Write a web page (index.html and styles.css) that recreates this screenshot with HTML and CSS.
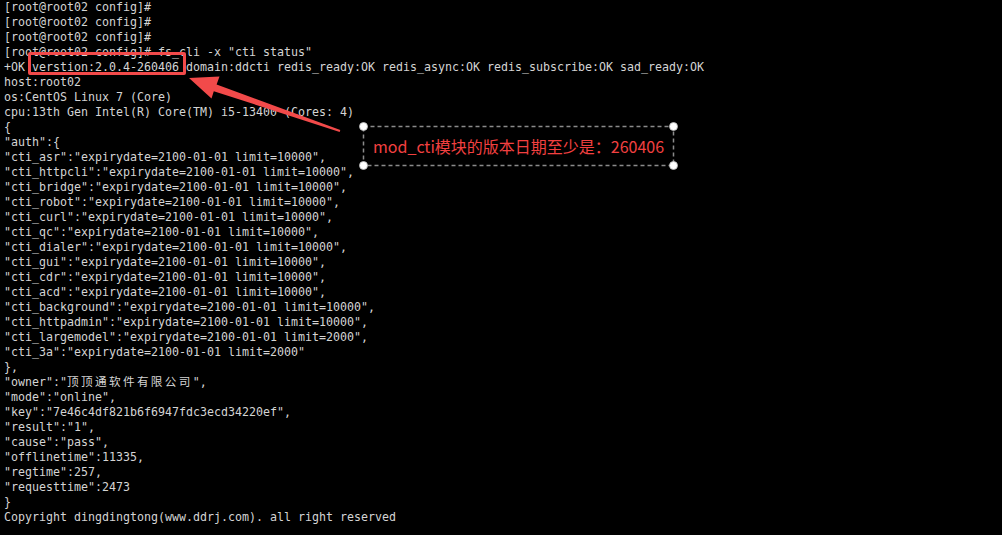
FILE: index.html
```html
<!DOCTYPE html>
<html>
<head>
<meta charset="utf-8">
<link rel="stylesheet" href="styles.css">
</head>
<body>
<div class="screen">
<pre class="term">[root@root02 config]#
[root@root02 config]#
[root@root02 config]#
[root@root02 config]# fs_cli -x "cti status"
+OK verstion:2.0.4-260406 domain:ddcti redis_ready:OK redis_async:OK redis_subscribe:OK sad_ready:OK
host:root02
os:CentOS Linux 7 (Core)
cpu:13th Gen Intel(R) Core(TM) i5-13400 (Cores: 4)
{
"auth":{
"cti_asr":"expirydate=2100-01-01 limit=10000",
"cti_httpcli":"expirydate=2100-01-01 limit=10000",
"cti_bridge":"expirydate=2100-01-01 limit=10000",
"cti_robot":"expirydate=2100-01-01 limit=10000",
"cti_curl":"expirydate=2100-01-01 limit=10000",
"cti_qc":"expirydate=2100-01-01 limit=10000",
"cti_dialer":"expirydate=2100-01-01 limit=10000",
"cti_gui":"expirydate=2100-01-01 limit=10000",
"cti_cdr":"expirydate=2100-01-01 limit=10000",
"cti_acd":"expirydate=2100-01-01 limit=10000",
"cti_background":"expirydate=2100-01-01 limit=10000",
"cti_httpadmin":"expirydate=2100-01-01 limit=10000",
"cti_largemodel":"expirydate=2100-01-01 limit=2000",
"cti_3a":"expirydate=2100-01-01 limit=2000"
},
"owner":"<span class="cjk">顶顶通软件有限公司</span>",
"mode":"online",
"key":"7e46c4df821b6f6947fdc3ecd34220ef",
"result":"1",
"cause":"pass",
"offlinetime":11335,
"regtime":257,
"requesttime":2473
}
Copyright dingdingtong(www.ddrj.com). all right reserved</pre>

<div class="hl-box"></div>

<svg class="overlay" width="1002" height="535" viewBox="0 0 1002 535">
  <polygon class="arrow" points="189,78 219.5,76.5 216.6,84.6 340.3,130.1 339.7,131.9 213.8,91.2 211.5,98.5"/>
  <rect class="dash" x="363.5" y="126.5" width="310" height="39"/>
  <circle class="knob" cx="363.5" cy="126.5" r="4"/>
  <circle class="knob" cx="673.5" cy="126.5" r="4"/>
  <circle class="knob" cx="363.5" cy="165.5" r="4"/>
  <circle class="knob" cx="673.5" cy="165.5" r="4"/>
</svg>

<div class="note">mod_cti模块的版本日期至少是：260406</div>
</div>
</body>
</html>
```

FILE: styles.css
```css
html, body {
  margin: 0;
  padding: 0;
  background: #000;
}
.screen {
  position: relative;
  width: 1002px;
  height: 535px;
  overflow: hidden;
  background: #000;
}
.term {
  margin: 0;
  padding: 0 0 0 4px;
  font-family: "DejaVu Sans Mono", "Noto Sans CJK SC", monospace;
  font-size: 11.63px;
  line-height: 15px;
  color: #d4d4d4;
  white-space: pre;
}
.cjk {
  font-family: "Noto Sans CJK SC", sans-serif;
  letter-spacing: 2.35px;
  line-height: 10px;
}
.hl-box {
  position: absolute;
  left: 28px;
  top: 52px;
  width: 152px;
  height: 17px;
  border: 3px solid #f24a4a;
  border-radius: 2px;
}
.overlay {
  position: absolute;
  left: 0;
  top: 0;
}
.arrow {
  fill: #f24a4a;
}
.dash {
  fill: none;
  stroke: #8a8a8a;
  stroke-width: 1.5;
  stroke-dasharray: 4 3;
}
.knob {
  fill: #fff;
  stroke: #bbb;
  stroke-width: 0.8;
}
.note {
  position: absolute;
  left: 364px;
  top: 127px;
  width: 310px;
  height: 38px;
  display: flex;
  align-items: center;
  padding-left: 9px;
  box-sizing: border-box;
  font-family: "Noto Sans CJK SC", sans-serif;
  font-size: 16px;
  color: #f24040;
}
```
